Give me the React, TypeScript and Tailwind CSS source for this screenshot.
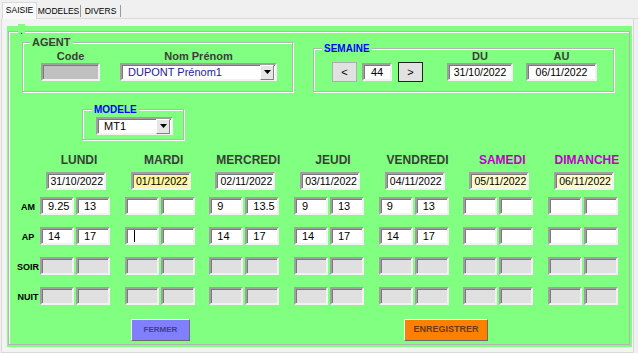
import React from "react";

type FieldProps = {
  w: string;
  bg?: string;
  align?: string;
  size?: string;
  children?: React.ReactNode;
};

const sunken =
  "border-2 border-t-[#a0a0a0] border-l-[#a0a0a0] border-r-[#f2f2f2] border-b-[#f2f2f2] shadow-[inset_1px_1px_0_#7a7a7a]";

const Field = ({ w, bg = "bg-white", align = "justify-start pl-[6px]", size = "text-[11px]", children }: FieldProps) => (
  <div className={`${w} h-[18px] ${bg} ${sunken} flex items-center ${align} ${size} leading-none text-black`}>
    {children}
  </div>
);

const Group = ({
  className,
  caption,
  captionClass,
  children,
}: {
  className: string;
  caption: string;
  captionClass: string;
  children?: React.ReactNode;
}) => (
  <div
    className={`relative border border-[#b4b4b4] shadow-[1px_1px_0_#ffffff,inset_1px_1px_0_#ffffff] ${className}`}
  >
    <span className={`absolute -top-[7px] px-[2px] bg-[#80ff80] leading-[13px] font-bold ${captionClass}`}>
      {caption}
    </span>
    {children}
  </div>
);

const DropArrow = () => (
  <div className="w-[14px] h-[15px] mr-[1px] bg-[#e6e6e6] border border-t-white border-l-white border-r-[#808080] border-b-[#808080] flex items-center justify-center">
    <svg width="7" height="4" viewBox="0 0 7 4">
      <path d="M0 0h7L3.5 4z" fill="#000" />
    </svg>
  </div>
);

const days = [
  { name: "LUNDI", date: "31/10/2022", dateBg: "bg-white", color: "text-[#3c3c3c]", am: ["9.25", "13"], ap: ["14", "17"] },
  { name: "MARDI", date: "01/11/2022", dateBg: "bg-[#fff79a]", color: "text-[#3c3c3c]", am: ["", ""], ap: ["|", ""] },
  { name: "MERCREDI", date: "02/11/2022", dateBg: "bg-white", color: "text-[#3c3c3c]", am: ["9", "13.5"], ap: ["14", "17"] },
  { name: "JEUDI", date: "03/11/2022", dateBg: "bg-white", color: "text-[#3c3c3c]", am: ["9", "13"], ap: ["14", "17"] },
  { name: "VENDREDI", date: "04/11/2022", dateBg: "bg-white", color: "text-[#3c3c3c]", am: ["9", "13"], ap: ["14", "17"] },
  { name: "SAMEDI", date: "05/11/2022", dateBg: "bg-[#fffccc]", color: "text-[#c000c8]", am: ["", ""], ap: ["", ""] },
  { name: "DIMANCHE", date: "06/11/2022", dateBg: "bg-[#fffccc]", color: "text-[#c000c8]", am: ["", ""], ap: ["", ""] },
];

const Cell = ({ value, disabled }: { value?: string; disabled?: boolean }) => (
  <Field w="w-[34px]" bg={disabled ? "bg-[#e0e0e0]" : "bg-white"} align="justify-start pl-[6px]">
    {value === "|" ? <span className="w-px h-[12px] bg-black ml-[1px]" /> : value}
  </Field>
);

const Row = ({ label, kind }: { label: string; kind: "am" | "ap" | "off" }) => (
  <div className="flex items-center h-[18px]">
    <div className="w-[24px] pt-[3px] text-center text-[9px] font-bold text-black whitespace-nowrap">{label}</div>
    <div className="grid grid-cols-[repeat(7,72px)] gap-x-[12.67px]">
      {days.map((d) => (
        <div key={d.name} className="flex gap-[2px]">
          {kind === "off" ? (
            <>
              <Cell disabled />
              <Cell disabled />
            </>
          ) : (
            <>
              <Cell value={d[kind][0]} />
              <Cell value={d[kind][1]} />
            </>
          )}
        </div>
      ))}
    </div>
  </div>
);

const NavButton = ({ label, focused }: { label: string; focused?: boolean }) => (
  <div
    className={`w-[25px] h-[20px] bg-[#e1e1e1] border flex items-center justify-center text-[11px] text-black ${
      focused ? "border-[#222]" : "border-[#adadad]"
    }`}
  >
    {label}
  </div>
);

export default function App() {
  return (
    <div className="w-[638px] h-[353px] bg-[#f0f0f0] overflow-hidden font-['Liberation_Sans',Arial,sans-serif]">
      {/* tabs */}
      <div className="flex h-[19px] items-end pl-[2px]">
        <div className="w-[35px] h-[17px] bg-[#f9f9f9] border border-b-0 border-[#d9d9d9] text-center text-[8.5px] leading-[15px] text-black">
          SAISIE
        </div>
        <div className="flex h-[15px] items-center border-b border-[#d9d9d9] text-[8.5px] text-black">
          <span className="w-[44px] text-center border-r border-[#9a9a9a] leading-[12px]">MODELES</span>
          <span className="w-[40px] text-center border-r border-[#9a9a9a] leading-[12px]">DIVERS</span>
        </div>
        <div className="flex-1 border-b border-[#d9d9d9]" />
      </div>

      {/* page */}
      <div className="ml-[1px] w-[633px] h-[334px] border-l border-r border-b border-[#d9d9d9] bg-[#f3f3f3] pl-[5px] pt-[7px]">
        <div className="w-[625px] h-[321px] bg-[#80ff80] pt-[5px] pl-[1px]">
          <div className="relative w-[622px] h-[314px] border border-[#b4b4b4] shadow-[inset_1px_1px_0_#ffffff] pl-[7px] pt-[10px]">
            <span className="absolute -top-[8px] left-[9px] px-[2px] bg-[#80ff80] text-[10px] leading-[13px] text-black">
              .
            </span>

            {/* top row */}
            <div className="flex items-start">
              <Group className="ml-[6px] w-[271px] h-[50px]" caption="AGENT" captionClass="left-[7px] text-[11px] text-[#3c3c3c]">
                <div className="flex gap-[20px] pl-[18px] pt-[7px]">
                  <div className="flex flex-col items-center w-[59px]">
                    <span className="text-[11px] font-bold leading-[13px] text-[#3c3c3c]">Code</span>
                    <Field w="w-[59px]" bg="bg-[#c0c0c0]" />
                  </div>
                  <div className="flex flex-col items-center w-[157px]">
                    <span className="text-[11px] font-bold leading-[13px] text-[#3c3c3c]">Nom Prénom</span>
                    <div className={`w-[157px] h-[18px] bg-white ${sunken} flex items-center justify-between pl-[6px]`}>
                      <span className="text-[11px] text-[#22229a]">DUPONT Prénom1</span>
                      <DropArrow />
                    </div>
                  </div>
                </div>
              </Group>

              <Group className="ml-[20px] mt-[6px] w-[301px] h-[44px]" caption="SEMAINE" captionClass="left-[8px] text-[10px] text-[#0000ff]">
                <div className="flex items-end pl-[18px] pt-[1px]">
                  <NavButton label="<" />
                  <div className="ml-[5px] mb-[1px]">
                    <Field w="w-[30px]" align="justify-center">44</Field>
                  </div>
                  <div className="ml-[6px]">
                    <NavButton label=">" focused />
                  </div>
                  <div className="ml-[24px] flex flex-col items-center w-[66px] mb-[1px]">
                    <span className="text-[11px] font-bold leading-[13px] text-[#3c3c3c]">DU</span>
                    <Field w="w-[66px]" align="justify-center" size="text-[10.5px]">31/10/2022</Field>
                  </div>
                  <div className="ml-[13px] flex flex-col items-center w-[71px] mb-[1px]">
                    <span className="text-[11px] font-bold leading-[13px] text-[#3c3c3c]">AU</span>
                    <Field w="w-[71px]" align="justify-center" size="text-[10.5px]">06/11/2022</Field>
                  </div>
                </div>
              </Group>
            </div>

            {/* modele */}
            <Group className="ml-[66px] mt-[17px] w-[102px] h-[31px]" caption="MODELE" captionClass="left-[9px] text-[10px] text-[#0000ff]">
              <div className="pl-[13px] pt-[7px]">
                <div className={`w-[77px] h-[18px] bg-white ${sunken} flex items-center justify-between pl-[6px]`}>
                  <span className="text-[11px] text-black">MT1</span>
                  <DropArrow />
                </div>
              </div>
            </Group>

            {/* day headers */}
            <div className="flex mt-[13px]">
              <div className="w-[24px]" />
              <div className="grid grid-cols-[repeat(7,72px)] gap-x-[12.67px]">
                {days.map((d) => (
                  <div key={d.name} className="flex flex-col items-center">
                    <span className={`pl-[6px] text-[12px] font-bold leading-[14px] whitespace-nowrap ${d.color}`}>{d.name}</span>
                    <div className="mt-[5px]">
                      <Field w="w-[60px]" bg={d.dateBg} align="justify-end pr-[1px]" size="text-[10.5px]">
                        {d.date}
                      </Field>
                    </div>
                  </div>
                ))}
              </div>
            </div>

            <div className="mt-[7px] flex flex-col gap-[12px]">
              <Row label="AM" kind="am" />
              <Row label="AP" kind="ap" />
              <Row label="SOIR" kind="off" />
              <Row label="NUIT" kind="off" />
            </div>

            {/* buttons */}
            <div className="flex mt-[14px]">
              <div className="ml-[115px] w-[59px] h-[22px] bg-[#8080ff] border border-t-white border-l-white border-r-[#6a6a6a] border-b-[#6a6a6a] flex items-center justify-center text-[8px] font-bold text-[#40407a]">
                FERMER
              </div>
              <div className="ml-[214px] w-[84px] h-[22px] bg-[#ff8000] border border-t-white border-l-white border-r-[#6a6a6a] border-b-[#6a6a6a] flex items-center justify-center text-[9px] font-bold text-[#6a3a1a]">
                ENREGISTRER
              </div>
            </div>
          </div>
        </div>
      </div>
    </div>
  );
}
